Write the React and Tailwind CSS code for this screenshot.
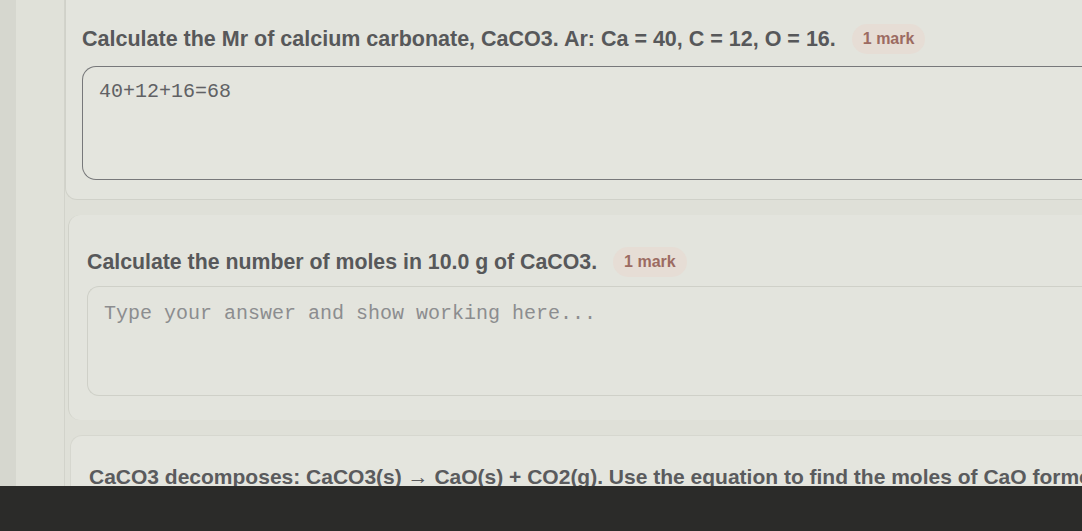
import React from 'react';

const questions = [
  {
    id: 1,
    text: 'Calculate the Mr of calcium carbonate, CaCO3. Ar: Ca = 40, C = 12, O = 16.',
    answer: '40+12+16=68',
  },
  {
    id: 2,
    text: 'Calculate the number of moles in 10.0 g of CaCO3.',
    answer: '',
  },
];

function Badge() {
  return (
    <span className="ml-4 inline-flex h-[30px] items-center rounded-full bg-[#e6ddd5] px-[11px] text-[16px] font-bold text-[#9c6b62]">
      1 mark
    </span>
  );
}

export default function App() {
  return (
    <div className="flex h-[531px] w-[1082px] flex-col overflow-hidden bg-[#dcddd5] font-['Liberation_Sans',Arial,sans-serif]">
      <div className="flex min-h-0 flex-1">
        {/* left edge of the screen */}
        <div className="w-[16px] shrink-0 bg-[#d6d7cf]" />
        <div className="w-[49px] shrink-0 border-r border-[#d2d3cb] bg-[#e0e1d9]" />

        {/* question list */}
        <div className="flex min-w-0 flex-1 flex-col gap-[15px] bg-[#dfe0d8]">
          {/* Q1 */}
          <div className="-mt-3 flex h-[212px] shrink-0 flex-col rounded-bl-xl border-b border-l border-[#d0d1c9] bg-[#e3e4dd] pl-[16px] pt-[39px]">
            <div className="flex h-[24px] items-center whitespace-nowrap">
              <h2 className="text-[21.5px] font-bold leading-[24px] text-[#57585a]">{questions[0].text}</h2>
              <Badge />
            </div>
            <textarea
              readOnly
              value={questions[0].answer}
              className="mt-[15px] h-[114px] w-[1010px] resize-none rounded-l-[14px] border-[1.5px] border-r-0 border-[#77787a] bg-[#e4e5de] px-[16px] pt-[10px] font-['Liberation_Mono',monospace] text-[20px] text-[#606164] outline-none"
            />
          </div>

          {/* Q2 */}
          <div className="ml-[3px] flex h-[205px] shrink-0 flex-col rounded-l-xl border-l border-[#d0d1c9] bg-[#e3e4dd] pl-[18px] pt-[35px]">
            <div className="flex h-[24px] items-center whitespace-nowrap">
              <h2 className="text-[21.3px] font-bold leading-[24px] text-[#57585a]">{questions[1].text}</h2>
              <Badge />
            </div>
            <textarea
              readOnly
              placeholder="Type your answer and show working here..."
              className="mt-[12px] h-[110px] w-[1010px] resize-none rounded-l-[12px] border border-r-0 border-[#cfd0c8] bg-[#e3e4dd] px-[16px] pt-[12px] font-['Liberation_Mono',monospace] text-[20px] text-[#606164] outline-none placeholder:text-[#8c8d8f]"
            />
          </div>

          {/* Q3, cut off by the bottom bar */}
          <div className="ml-[5px] flex flex-1 items-end rounded-tl-xl border-l border-t border-[#d6d7cf] bg-[#e4e5de] pl-[18px]">
            <h2 className="-mb-[3px] whitespace-nowrap text-[21px] font-bold leading-[24px] text-[#5a5b5d]">
              CaCO3 decomposes: CaCO3(s) → CaO(s) + CO2(g). Use the equation to find the moles of CaO formed.
            </h2>
          </div>
        </div>
      </div>

      {/* dark bezel at the bottom */}
      <div className="relative z-10 h-[45px] shrink-0 bg-[#2b2b29]" />
    </div>
  );
}
